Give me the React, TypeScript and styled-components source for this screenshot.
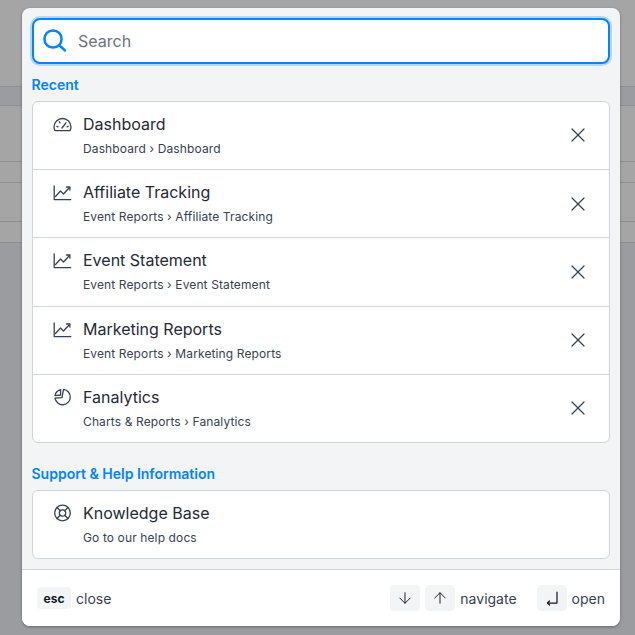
import React from "react"
import styled, { createGlobalStyle } from "styled-components"
import { ArrowDown, ArrowUp, X } from "lucide-react"

const GlobalStyle = createGlobalStyle`
  html, body {
    margin: 0;
    padding: 0;
    background: #9b9ca0;
    font-family: Inter, "Liberation Sans", sans-serif;
  }
`

const Page = styled.div`
  position: relative;
  width: 635px;
  height: 635px;
  overflow: hidden;
  background: #9b9ca0;
`

const Backdrop = styled.div`
  display: flex;
  flex-direction: column;
`

const BackdropRow = styled.div<{ $h: number; $bg: string }>`
  height: ${(p) => p.$h}px;
  background: ${(p) => p.$bg};
  border-bottom: 1px solid #8f9094;
`

const Modal = styled.div`
  position: absolute;
  left: 22px;
  top: 8px;
  width: 598px;
  height: 618px;
  display: flex;
  flex-direction: column;
  background: #f3f4f6;
  border-radius: 8px;
  box-shadow: 0 1px 3px rgba(0, 0, 0, 0.35);
  overflow: hidden;
`

const Body = styled.div`
  flex: 1;
  padding: 10px 10px 0;
`

const SearchBox = styled.div`
  height: 46px;
  box-sizing: border-box;
  display: flex;
  align-items: center;
  gap: 9px;
  padding: 0 9px;
  background: #fff;
  border: 2px solid #0084ff;
  border-radius: 8px;
  box-shadow: 0 0 0 2px rgba(0, 132, 255, 0.25);
  font-size: 16px;
  color: #6b7280;
`

const SectionTitle = styled.div<{ $top: number }>`
  margin-top: ${(p) => p.$top}px;
  margin-bottom: 5.75px;
  margin-left: -0.5px;
  height: 20px;
  line-height: 20px;
  font-size: 14px;
  font-weight: 600;
  color: #0084ff;
`

const Card = styled.div`
  background: #fff;
  border: 1px solid #d1d5db;
  border-radius: 6px;
`

const Row = styled.div`
  height: 67.25px;
  display: flex;
  align-items: flex-start;
  padding: 0 19px 0 20px;
  & + & {
    border-top: 1px solid #d1d5db;
  }
`

const SingleRow = styled(Row)`
  height: 66.5px;
`

const RowIcon = styled.svg`
  width: 20px;
  height: 20px;
  margin-top: 12px;
  margin-right: 10px;
  flex: none;
  fill: none;
  stroke: #374151;
  stroke-width: 1.3;
  stroke-linecap: round;
  stroke-linejoin: round;
`

const RowText = styled.div`
  flex: 1;
  padding-top: 11px;
`

const RowTitle = styled.div`
  font-size: 16px;
  line-height: 22px;
  color: #1f2937;
`

const RowSub = styled.div`
  margin-top: 5px;
  font-size: 12px;
  line-height: 18px;
  letter-spacing: 0.12px;
  color: #374151;
`

const Remove = styled.div`
  align-self: center;
  display: flex;
  color: #374151;
`

const Footer = styled.div`
  height: 56px;
  display: flex;
  align-items: center;
  padding: 0 15px;
  background: #fff;
  border-top: 1px solid #d1d5db;
  font-size: 14px;
  color: #374151;
`

const Key = styled.div<{ $gap?: number }>`
  height: 26px;
  min-width: 30px;
  box-sizing: border-box;
  display: flex;
  align-items: center;
  justify-content: center;
  margin-right: ${(p) => p.$gap ?? 5}px;
  background: #f3f4f6;
  border-radius: 4px;
  color: #111827;
`

const EscKey = styled(Key)`
  min-width: 34px;
  height: 22px;
  font-size: 12px;
  font-weight: 700;
`

const Spacer = styled.div`
  flex: 1;
`

const Hint = styled.span<{ $gap?: number }>`
  margin-right: ${(p) => p.$gap ?? 0}px;
`

const gauge = (
  <>
    <path d="M2 16.7C1.3 15.5 1 14.3 1 13a8.5 8.5 0 0 1 17 0c0 1.3-.3 2.5-1 3.7z" />
    <path d="M9 14l4-5.2" />
    <path d="M3.8 12.4l1.2.4M6.3 7.8l.7 1M15.2 12.4l-1.2.4" />
  </>
)

const chart = (
  <>
    <path d="M1.2 4v13.6h16.6" />
    <path d="M2.5 14.5l5-5.5 3 3 6-6.5" />
    <path d="M13.5 5h3.4v3.2" />
  </>
)

const pie = (
  <>
    <path d="M10.5 2.4A7.7 7.7 0 1 1 2 11.2L9 10.6z" />
    <path d="M7.6 2.7A7.7 7.7 0 0 0 2 8.6L7.6 8z" />
  </>
)

const lifebuoy = (
  <>
    <circle cx="9.5" cy="10" r="7.8" />
    <circle cx="9.5" cy="10" r="3.2" />
    <path d="M4 4.5l3.2 3.2M15 4.5l-3.2 3.2M4 15.5l3.2-3.2M15 15.5l-3.2-3.2" />
  </>
)

const recent = [
  { icon: gauge, title: "Dashboard", sub: "Dashboard › Dashboard" },
  { icon: chart, title: "Affiliate Tracking", sub: "Event Reports › Affiliate Tracking" },
  { icon: chart, title: "Event Statement", sub: "Event Reports › Event Statement" },
  { icon: chart, title: "Marketing Reports", sub: "Event Reports › Marketing Reports" },
  { icon: pie, title: "Fanalytics", sub: "Charts & Reports › Fanalytics" },
]

const App: React.FC = () => {
  return (
    <Page>
      <GlobalStyle />
      <Backdrop>
        <BackdropRow $h={86} $bg="#a5a5a5" />
        <BackdropRow $h={18} $bg="#9b9ca0" />
        <BackdropRow $h={55} $bg="#a5a5a5" />
        <BackdropRow $h={20} $bg="#a5a5a5" />
        <BackdropRow $h={38} $bg="#a5a5a5" />
        <BackdropRow $h={20} $bg="#a5a5a5" />
      </Backdrop>
      <Modal>
        <Body>
          <SearchBox>
            <svg width="26" height="26" viewBox="0 0 26 26" fill="none" stroke="#0084ff" strokeWidth="2.5" strokeLinecap="round">
              <circle cx="10" cy="11" r="8.6" />
              <path d="M16.5 17.5L22 22.5" />
            </svg>
            Search
          </SearchBox>
          <SectionTitle $top={11}>Recent</SectionTitle>
          <Card>
            {recent.map((item) => (
              <Row key={item.title}>
                <RowIcon viewBox="0 0 20 20">{item.icon}</RowIcon>
                <RowText>
                  <RowTitle>{item.title}</RowTitle>
                  <RowSub>{item.sub}</RowSub>
                </RowText>
                <Remove>
                  <X size={24} strokeWidth={1.25} />
                </Remove>
              </Row>
            ))}
          </Card>
          <SectionTitle $top={21.25}>Support &amp; Help Information</SectionTitle>
          <Card>
            <SingleRow>
              <RowIcon viewBox="0 0 20 20">{lifebuoy}</RowIcon>
              <RowText>
                <RowTitle>Knowledge Base</RowTitle>
                <RowSub>Go to our help docs</RowSub>
              </RowText>
            </SingleRow>
          </Card>
        </Body>
        <Footer>
          <EscKey>esc</EscKey>
          <Hint>close</Hint>
          <Spacer />
          <Key><ArrowDown size={18} strokeWidth={1.25} /></Key>
          <Key><ArrowUp size={18} strokeWidth={1.25} /></Key>
          <Hint $gap={20}>navigate</Hint>
          <Key>
            <svg width="16" height="16" viewBox="0 0 16 16" fill="none" stroke="currentColor" strokeWidth="1.25" strokeLinecap="round" strokeLinejoin="round">
              <path d="M13 2v11H3.5" />
              <path d="M5.5 11L3.5 13 5.5 15" />
            </svg>
          </Key>
          <Hint>open</Hint>
        </Footer>
      </Modal>
    </Page>
  )
}

export default App
